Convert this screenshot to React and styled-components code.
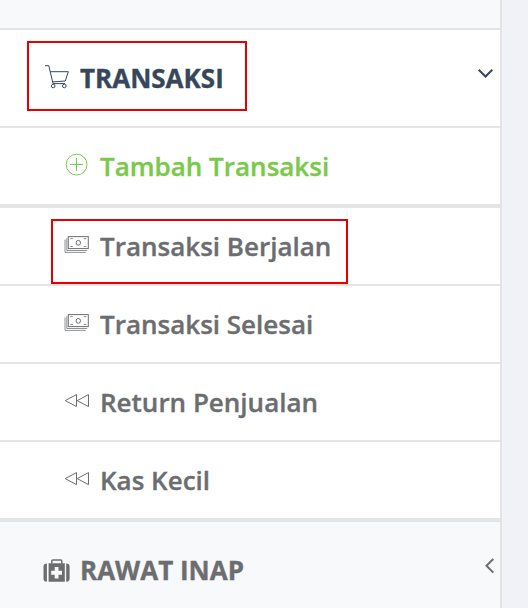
import React from 'react';
import styled, { createGlobalStyle } from 'styled-components';

const GlobalStyle = createGlobalStyle`
  * {
    box-sizing: border-box;
  }
  body {
    margin: 0;
    background: #f0f2f7;
    font-family: 'Open Sans', 'Noto Sans', sans-serif;
    overflow: hidden;
  }
`

const Sidebar = styled.nav`
  width: 502px;
  height: 608px;
  overflow: hidden;
  background: #f8f9fb;
  border-right: 2px solid #e4e4e5;
`

const PreviousItem = styled.div`
  height: 30px;
  border-bottom: 2px solid #e4e4e5;
`

const MenuHeader = styled.div`
  position: relative;
  display: flex;
  align-items: center;
  height: 96px;
  padding: 0 5px 0 42px;
  background: ${props => props.$open ? '#fff' : '#f8f9fb'};
  color: ${props => props.$open ? '#36475c' : '#6c6d70'};
  font-size: 26px;
  font-weight: 700;
`

const SubMenu = styled.ul`
  list-style: none;
  margin: 0;
  padding: 0;
  background: #fff;
  border-top: 2px solid #e4e4e5;
  border-bottom: 2px solid #e4e4e5;
`

const SubItem = styled.li`
  position: relative;
  display: flex;
  align-items: center;
  height: ${props => props.$thick ? '80px' : '78px'};
  padding-left: 62px;
  border-bottom: ${props => props.$thick ? '4px' : '2px'} solid #e4e4e5;
  color: ${props => props.$green ? '#7ac94b' : '#6c6d70'};
  font-size: 26px;
  font-weight: 600;
`

const Icon = styled.svg`
  flex: none;
  width: 30px;
  height: 30px;
  margin-right: 8px;
  fill: none;
  stroke: currentColor;
  stroke-width: 1;
`

const Label = styled.span`
  line-height: 36px;
  white-space: nowrap;
  -webkit-text-stroke: 0.35px currentColor;
`

const Arrow = styled.svg`
  flex: none;
  width: 20px;
  height: 20px;
  margin-left: auto;
  margin-bottom: 10px;
  fill: none;
  stroke: currentColor;
  stroke-width: 2;
`

// red marker drawn over a menu entry
const Marker = styled.span`
  position: absolute;
  top: 11px;
  left: ${props => props.$left}px;
  width: ${props => props.$width}px;
  height: ${props => props.$height}px;
  border: 2px solid #e60000;
`

const CartIcon = () => (
  <Icon viewBox="0 0 30 30">
    <path d="M3 2.7h3.8L11 20.6h12M8 8.7h18.3l-3 9.3-12.7.9" />
    <circle cx="11.2" cy="23" r="1.8" />
    <circle cx="22.3" cy="23" r="1.8" />
  </Icon>
)

const PlusIcon = () => (
  <Icon viewBox="0 0 30 30">
    <circle cx="14.6" cy="13.6" r="10.4" />
    <path d="M8 13.5h13M14.5 7v13" />
  </Icon>
)

const CashIcon = () => (
  <Icon viewBox="0 0 30 30">
    <rect x="6.3" y="5.6" width="20" height="12" />
    <ellipse cx="16.3" cy="11.8" rx="2.2" ry="2.4" />
    <path d="M8.3 7.6h2.5M21.8 7.6h2.5M8.3 15.5h2.5M21.8 15.5h2.5" opacity=".8" />
    <path d="M4.8 7v12.5h20.4M3 8.6v12.8h20.8" opacity=".75" />
  </Icon>
)

const RewindIcon = () => (
  <Icon viewBox="0 0 30 30">
    <path d="M14.5 7.6v12L3.2 13.6zM26.5 7.6v12L15.2 13.6z" />
  </Icon>
)

const MedkitIcon = () => (
  <Icon viewBox="0 0 30 30">
    <path d="M9.8 8.5V6q0-1.1 1.1-1.1h7.8q1.1 0 1.1 1.1v2.5" strokeWidth="1.5" />
    <g fill="currentColor" stroke="none">
      <path d="M4.9 8.5v18.2q-3.4 0-3.4-3.3V11.8q0-3.3 3.4-3.3zM24.2 8.5v18.2q3.4 0 3.4-3.3V11.8q0-3.3-3.4-3.3z" />
      <path fillRule="evenodd" d="M6.6 8.2h16.2v18.5H6.6zM12.7 12v3.7H9.2v4h3.5v3.7h3.8v-3.7H20v-4h-3.5V12z" />
    </g>
  </Icon>
)

const items = [
  { name: 'Tambah Transaksi', icon: PlusIcon, green: true, thick: true },
  { name: 'Transaksi Berjalan', icon: CashIcon, marked: true },
  { name: 'Transaksi Selesai', icon: CashIcon },
  { name: 'Return Penjualan', icon: RewindIcon },
  { name: 'Kas Kecil', icon: RewindIcon },
]

const App = () => {
  return (
    <>
      <GlobalStyle />
      <Sidebar>
        <PreviousItem />
        <MenuHeader $open>
          <CartIcon />
          <Label>TRANSAKSI</Label>
          <Arrow viewBox="0 0 20 20">
            <path d="M3.7 6.8l6.8 6.7 6.8-6.7" />
          </Arrow>
          <Marker $left={27} $width={220} $height={70} />
        </MenuHeader>
        <SubMenu>
          {items.map(item => (
            <SubItem key={item.name} $green={item.green} $thick={item.thick}>
              <item.icon />
              <Label>{item.name}</Label>
              {item.marked && <Marker $left={51} $width={297} $height={65} />}
            </SubItem>
          ))}
        </SubMenu>
        <MenuHeader>
          <MedkitIcon />
          <Label>RAWAT INAP</Label>
          <Arrow viewBox="0 0 20 20">
            <path d="M18.3 4l-6.8 6.8 6.8 6.8" />
          </Arrow>
        </MenuHeader>
      </Sidebar>
    </>
  );
};

export default App;
